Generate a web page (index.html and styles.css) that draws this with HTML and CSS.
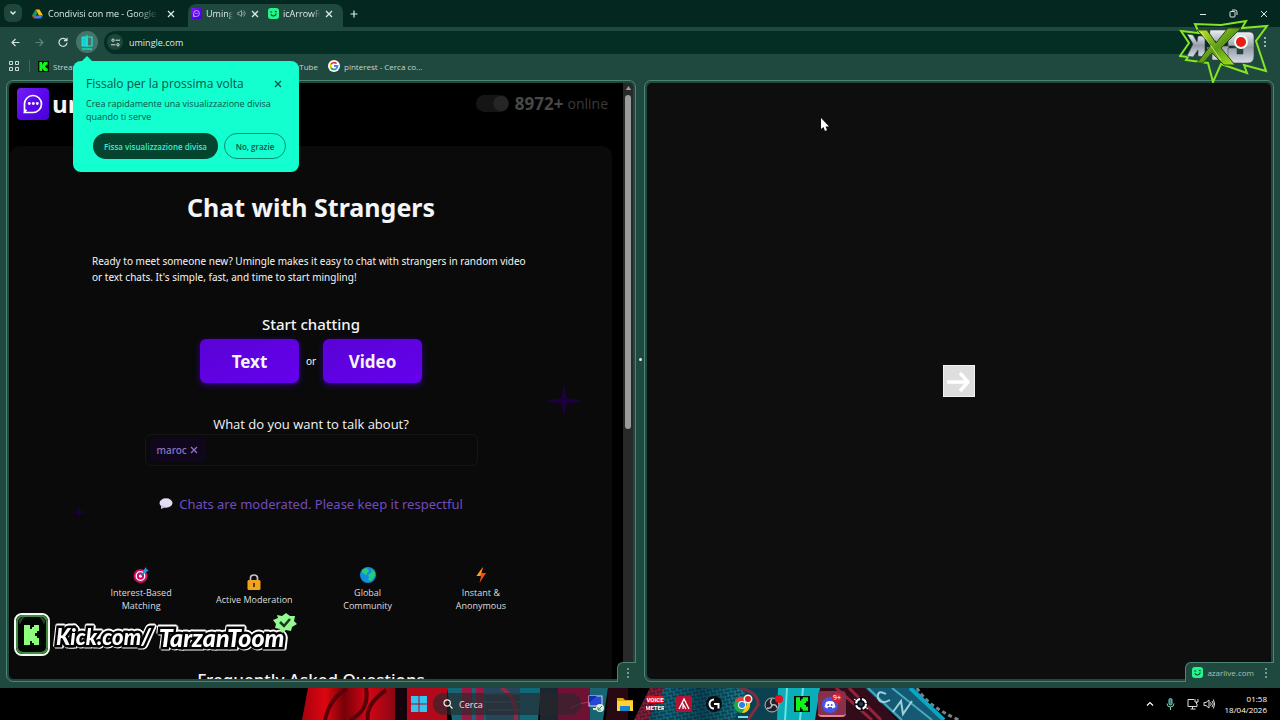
FILE: index.html
```html
<!DOCTYPE html>
<html lang="it">
<head>
<meta charset="utf-8">
<meta name="viewport" content="width=device-width, initial-scale=1">
<title>Umingle</title>
<link rel="stylesheet" href="styles.css">
</head>
<body>
<svg class="defs" aria-hidden="true">
  <symbol id="close" viewBox="0 0 10 10"><path d="M2 2l6 6M8 2L2 8" fill="none" stroke="currentColor" stroke-width="1.3"/></symbol>
  <symbol id="umingle" viewBox="0 0 32 32"><defs><linearGradient id="ug" x1="0" y1="0" x2="1" y2="1"><stop offset="0" stop-color="#7620f2"/><stop offset=".5" stop-color="#5a08ec"/><stop offset="1" stop-color="#4800d4"/></linearGradient></defs><rect width="32" height="32" rx="4" fill="url(#ug)"/><path d="M7.500 24v-8a8.500 8.500 0 1 1 8.500 8.500H7.200l2.300-2.800" fill="none" stroke="#fff" stroke-width="1.700" stroke-linejoin="round"/><circle cx="12.300" cy="15.500" r="1.400" fill="#fff"/><circle cx="16.300" cy="15.500" r="1.400" fill="#fff"/><circle cx="20.300" cy="15.500" r="1.400" fill="#fff"/></symbol>
  <symbol id="azar" viewBox="0 0 12 12"><rect width="12" height="12" rx="3" fill="#23f58a"/><path d="M2.500 4.300h2M7.500 3.500l2 .8M3 6.800c1.500 2.700 5 2.500 6-.8" fill="none" stroke="#06452a" stroke-width="1.200"/></symbol>
  <symbol id="kick" viewBox="0 0 12 12"><rect width="12" height="12" fill="#031006"/><path d="M1.500 1h3v2.600h1V2.300h1V1h4v3H9v1.300H8v1.400h1V8h1.500v3h-4V9.700h-1V8.400h-1V11h-3z" fill="#12f51a"/></symbol>
  <symbol id="dots" viewBox="0 0 4 12"><circle cx="2" cy="2" r="1"/><circle cx="2" cy="6" r="1"/><circle cx="2" cy="10" r="1"/></symbol>
</svg>

<header class="browser">
  <nav class="tabs" aria-label="Schede">
    <button class="tab-search" aria-label="Cerca schede"><svg width="8" height="8" viewBox="0 0 8 8"><path d="M1.500 2.500L4 5l2.500-2.500" fill="none" stroke="#e4f1ec" stroke-width="1.400"/></svg></button>
    <div class="tab tab-drive">
      <svg width="11" height="10" viewBox="0 0 22 20"><path d="M7 1h8l7 12h-8z" fill="#fbc116"/><path d="M7 1l4 7-7 11-4-6z" fill="#159957"/><path d="M7 13h15l-4 6H4z" fill="#3b7fed"/><path d="M7 13l-3 6-4-6z" fill="#e13e2e"/></svg>
      <span class="tab-title">Condivisi con me - Google Drive</span>
      <button aria-label="Chiudi scheda"><svg width="10" height="10"><use href="#close"/></svg></button>
    </div>
    <div class="split-tabs">
      <div class="tab tab-umingle">
        <svg width="11" height="11"><use href="#umingle"/></svg>
        <span class="tab-title">Umingle</span>
        <svg width="9" height="9" viewBox="0 0 12 12"><path d="M1 4.500h2L6 2v8L3 7.500H1zM7.500 4q2 2 0 4M9 2q4 4 0 8" fill="none" stroke="#a8beb7"/></svg>
        <button aria-label="Chiudi scheda"><svg width="10" height="10"><use href="#close"/></svg></button>
      </div>
      <div class="tab tab-azar">
        <svg width="11" height="11"><use href="#azar"/></svg>
        <span class="tab-title">icArrowRight</span>
        <button aria-label="Chiudi scheda"><svg width="10" height="10"><use href="#close"/></svg></button>
      </div>
    </div>
    <button class="new-tab" aria-label="Nuova scheda"><svg width="8" height="8" viewBox="0 0 8 8"><path d="M4 .5v7M.5 4h7" stroke="currentColor" stroke-width="1.200"/></svg></button>
    <div class="window-controls">
      <button aria-label="Riduci"><svg width="8" height="8" viewBox="0 0 8 8"><path d="M1 4.500h6" stroke="currentColor"/></svg></button>
      <button aria-label="Ripristina"><svg width="9" height="9" viewBox="0 0 9 9"><rect x="1" y="2.500" width="5" height="5.500" rx="1" fill="none" stroke="currentColor"/><path d="M3 1h3q2 0 2 2v3" fill="none" stroke="currentColor"/></svg></button>
      <button aria-label="Chiudi"><svg width="8" height="8" viewBox="0 0 8 8"><path d="M1 1l6 6M7 1L1 7" stroke="currentColor"/></svg></button>
    </div>
  </nav>

  <div class="toolbar">
    <button aria-label="Indietro"><svg width="9" height="9" viewBox="0 0 9 9"><path d="M8.500 4.500H1M4.500 1L1 4.500 4.500 8" fill="none" stroke="#d3e4dd" stroke-width="1.200"/></svg></button>
    <button aria-label="Avanti"><svg width="9" height="9" viewBox="0 0 9 9"><path d="M.5 4.500H8M4.500 1L8 4.500 4.500 8" fill="none" stroke="#5f8277" stroke-width="1.200"/></svg></button>
    <button aria-label="Ricarica"><svg width="10" height="10" viewBox="0 0 10 10"><path d="M8.300 3A4 4 0 1 0 9 5.700M9 .8V3.700H6" fill="none" stroke="#d3e4dd" stroke-width="1.200"/></svg></button>
    <div class="split-anchor">
      <button class="split-button" aria-label="Visualizzazione divisa"><svg width="12" height="15" viewBox="0 0 12 15"><path d="M1 2h5v9H1z" fill="#18cfd0" stroke="#18e5dc"/><path d="M6 0v12" stroke="#18e5dc" stroke-width="1.300"/><path d="M7 2h4v9H7" fill="none" stroke="#18e5dc" stroke-width="1.200"/><path d="M1 14h10" stroke="#18d5bb" stroke-width="1.500"/></svg></button>
      <section class="promo" aria-labelledby="promo-title">
        <div class="promo-head"><h2 id="promo-title">Fissalo per la prossima volta</h2><button aria-label="Chiudi"><svg width="10" height="10"><use href="#close"/></svg></button></div>
        <p>Crea rapidamente una visualizzazione divisa quando ti serve</p>
        <div class="promo-actions"><button class="pin">Fissa visualizzazione divisa</button><button class="decline">No, grazie</button></div>
      </section>
    </div>
    <label class="omnibox">
      <span class="site-info"><svg width="9" height="9" viewBox="0 0 9 9"><g fill="none" stroke="#d3e4dd"><circle cx="2" cy="2.200" r="1.200"/><path d="M4.500 2.200H9M0 6.800h4.500"/><circle cx="7" cy="6.800" r="1.200"/></g></svg></span>
      <input type="text" value="umingle.com" aria-label="Indirizzo">
    </label>
    <button class="menu" aria-label="Menu"><svg width="4" height="12" fill="#c6d8d0"><use href="#dots"/></svg></button>
  </div>

  <nav class="bookmarks" aria-label="Preferiti">
    <button class="apps" aria-label="App"><svg width="10" height="10" viewBox="0 0 10 10"><path d="M.5.500h3v3h-3zM6.500.500h3v3h-3zM.5 6.500h3v3h-3zM6.500 6.500h3v3h-3z" fill="none" stroke="#cfded8"/></svg></button>
    <a class="bm-stream" href="#"><svg width="11" height="11"><use href="#kick"/></svg>Stream</a>
    <a class="bm-youtube" href="#">YouTube</a>
    <a href="#"><svg width="12" height="12" viewBox="0 0 12 12"><circle cx="6" cy="6" r="6" fill="#fff"/><g fill="none" stroke-width="1.800"><path d="M8.600 3.700A3.500 3.500 0 0 0 3 4.300" stroke="#e94335"/><path d="M3 4.300a3.500 3.500 0 0 0 0 3.400" stroke="#f9bb05"/><path d="M3 7.700a3.500 3.500 0 0 0 5.200 1" stroke="#34a853"/><path d="M8.200 8.700Q9.500 7.600 9.500 6H6" stroke="#4285f4"/></g></svg>pinterest - Cerca co...</a>
  </nav>
  <svg class="stream-mark" viewBox="0 0 92 64" role="img" aria-label="KX9">
    <defs><linearGradient id="silver" x1="0" y1="0" x2="0" y2="1"><stop stop-color="#eef1f5"/><stop offset=".5" stop-color="#949ca6"/><stop offset="1" stop-color="#d6dde8"/></linearGradient><linearGradient id="lime" x1="0" y1="0" x2="1" y2="1"><stop stop-color="#c9ee2c"/><stop offset=".5" stop-color="#5c9a16"/><stop offset="1" stop-color="#b5ef20"/></linearGradient></defs>
    <path d="M2 12l18 2-4-9 26 1 25-4-4 7 25-2-11 15 10 30-22-6 3 8-26-9-8 18-5-19-22-3 2-3-8-1 9-13z" fill="none" stroke="#84e522" stroke-width="2"/>
    <g fill="url(#silver)" stroke="#3b4248" stroke-width=".6">
      <path d="M8 15l6 1 4 7 1-6h7v21l-7-1v-6l-5 7-6-1 6-12z"/>
      <path d="M31 11h18v9h-6v7h7v14H33v-6h-5v-7h9v-6h-7z"/>
      <path d="M49 17q0-4 4-4h17q5 0 5 5v19q0 7-6 7H55q-6 0-6-7v-8h9v6h6V22h-6v5h-9z"/>
    </g>
    <path d="M18 11h10l9 13L49 9h13L42 29l14 17H45L33 34 24 44h-6l14-18z" fill="url(#lime)" stroke="#294c11"/>
    <path d="M22 13l20 28" stroke="#eaffba" stroke-width="1" opacity=".7"/>
    <circle cx="62" cy="23" r="7" fill="#e8fff1"/><circle cx="62" cy="23" r="5" fill="#e91c18"/>
  </svg>
</header>

<main class="panes">
  <section class="pane">
    <div class="page umingle">
      <div class="page-content">
        <div class="site-header">
          <svg width="32" height="32"><use href="#umingle"/></svg><strong class="brand">umingle</strong>
          <label class="online"><input type="checkbox" checked aria-label="Tema"><b>8972+</b><span>online</span></label>
        </div>
        <div class="card">
          <h1>Chat with Strangers</h1>
          <p class="intro">Ready to meet someone new? Umingle makes it easy to chat with strangers in random video or text chats. It's simple, fast, and time to start mingling!</p>
          <h2>Start chatting</h2>
          <div class="chat-buttons"><button>Text</button><span>or</span><button>Video</button></div>
          <label class="topic-label" for="topic">What do you want to talk about?</label>
          <div class="topics"><span class="chip">maroc <button aria-label="Rimuovi maroc"><svg width="10" height="10"><use href="#close"/></svg></button></span><input id="topic" type="text"></div>
          <p class="moderated"><svg width="14" height="12" viewBox="0 0 14 12"><ellipse cx="7" cy="5" rx="6.500" ry="4.700" fill="#e4dbf5"/><path d="M2 7v4l5-2" fill="#c9bfe0"/></svg>Chats are moderated. Please keep it respectful</p>
          <ul class="features">
            <li><svg width="16" height="16" viewBox="0 0 16 16"><circle cx="7.500" cy="9" r="7" fill="#cf0d65"/><circle cx="7.500" cy="9" r="4.300" fill="none" stroke="#fff" stroke-width="1.300"/><circle cx="7.500" cy="9" r="1.600" fill="#fff"/><path d="M8 8.500l4-4" stroke="#1585ca" stroke-width="1.500"/><path d="M10 4l3-4 .6 2.400L16 3l-4 3z" fill="#289be8"/></svg>Interest-Based<br>Matching</li>
            <li><svg width="16" height="16" viewBox="0 0 16 16"><path d="M4.500 7V4q0-3 3.500-3t3.500 3v3" fill="none" stroke="#c7c0cf" stroke-width="1.700"/><rect x="1.500" y="6" width="13" height="10" rx="1.500" fill="#f2a51a"/><path d="M8 9v4" stroke="#5b3914" stroke-width="2"/></svg>Active Moderation</li>
            <li><svg width="16" height="16" viewBox="0 0 16 16"><circle cx="8" cy="8" r="8" fill="#128cdf"/><path d="M2 3l5-2 2 3-2 2v2l-3-1-2-2zM8 8l4-3-1-3 4 3v4l-4 5-3-1 1-3z" fill="#27cc7a"/></svg>Global<br>Community</li>
            <li><svg width="16" height="16" viewBox="0 0 16 16"><path d="M10 0L3.500 9H8l-1.500 7L13 6H8.500z" fill="#f64d15"/><path d="M10 0L3.500 9H7z" fill="#ff9e24"/></svg>Instant &amp;<br>Anonymous</li>
          </ul>
          <h2 class="faq">Frequently Asked Questions</h2>
          <svg class="sparkle sparkle-big" viewBox="0 0 40 40"><path d="M20 0q2 17 4 17l16 3-16 3q-2 0-4 17-2-17-4-17L0 20l16-3q2 0 4-17z"/></svg>
          <svg class="sparkle sparkle-small" viewBox="0 0 40 40"><path d="M20 0q2 17 4 17l16 3-16 3q-2 0-4 17-2-17-4-17L0 20l16-3q2 0 4-17z"/></svg>
        </div>
      </div>
      <div class="scrollbar"><svg width="9" height="9" viewBox="0 0 9 9"><path d="M4.500 2L8 7H1z" fill="#9a9a9a"/></svg><span></span></div>
    </div>
    <div class="pane-tag"><svg width="4" height="12" fill="#93b5aa"><use href="#dots"/></svg></div>
    <div class="overlay-kick">
      <svg width="36" height="43" viewBox="0 0 36 43"><rect x="1" y="1" width="34" height="41" rx="7" fill="#020703" stroke="#f1fff0" stroke-width="2"/><rect x="3" y="3" width="30" height="37" rx="6" fill="none" stroke="#438a42" stroke-width="2"/><path d="M5 8q1-4 6-4-4 3-5 8zM31 8q-1-4-6-4 4 3 5 8z" fill="#3b3f42"/><path d="M10 12h6v4h2v-2h2v-2h5v6h-2v2h-2v3h2v2h2v7h-5v-2h-2v-2h-2v4h-6z" fill="#8dff7d"/></svg>
      <span class="kick-url">Kick.com/</span><span class="kick-name">TarzanToom</span>
      <svg class="verified" width="24" height="20" viewBox="0 0 24 20"><path d="M4 2l5 1 4-3 4 3h5l-1 5 3 3-5 3-1 4-5-1-4 3-2-4-5-1 1-4-3-4 5-2z" fill="#93f990"/><path d="M7 9l4 4 6-7" fill="none" stroke="#18381a" stroke-width="2.500"/></svg>
    </div>
  </section>
  <div class="divider"></div>
  <section class="pane">
    <div class="page azar"><svg width="32" height="32" viewBox="0 0 32 32"><rect width="32" height="32" fill="#f1f1f1"/><rect x="1" y="1" width="30" height="30" fill="#dedede"/><path d="M4 17h21M17 8l8 9-8 9" fill="none" stroke="#fff" stroke-width="3.500" stroke-linejoin="round"/></svg></div>
    <div class="pane-tag"><svg width="11" height="11"><use href="#azar"/></svg><span>azarlive.com</span><svg width="4" height="12" fill="#93b5aa"><use href="#dots"/></svg></div>
    <svg class="cursor" width="8" height="14" viewBox="0 0 8 14"><path d="M0 0v11l2.500-2L4 13l2-1-1.500-3.500H8z" fill="#fff"/></svg>
  </section>
</main>

<footer class="taskbar">
  <svg class="wallpaper" viewBox="0 0 1280 32" preserveAspectRatio="xMidYMid slice" aria-hidden="true">
    <defs>
      <linearGradient id="red"><stop stop-color="#a8000d"/><stop offset=".25" stop-color="#dc0710"/><stop offset=".45" stop-color="#770008"/><stop offset=".7" stop-color="#d50515"/><stop offset="1" stop-color="#860712"/></linearGradient>
      <linearGradient id="teal"><stop stop-color="#083c4a"/><stop offset=".3" stop-color="#116a80"/><stop offset=".6" stop-color="#0b465a"/><stop offset="1" stop-color="#168395"/></linearGradient>
      <pattern id="weave" width="5" height="5" patternUnits="userSpaceOnUse" patternTransform="rotate(35)"><path d="M0 1h3M2 4h3" stroke="#071820" stroke-width="1"/></pattern>
    </defs>
    <path d="M308 0h88l-1 32h-93z" fill="url(#red)"/><path d="M325 32q5-22 22-31M350 32q20-10 16-32M368 32q-3-15 18-30" fill="none" stroke="#5a000a" stroke-width="4"/>
    <path d="M395 0h12v32h-12z" fill="#14040b"/><path d="M407 0h40v32h-40z" fill="#b3091b"/>
    <path d="M447 0h50l30 32h-75z" fill="#176676"/><path d="M462 0h10v32h-10zM476 0h8v32h-8z" fill="#9a1841"/>
    <path d="M484 0h52l-4 32h-46z" fill="#254759"/><path d="M484 6h40M484 14h48M488 22h40" stroke="#48728a"/><path d="M501 0q16 8 15 32" fill="none" stroke="#932944" stroke-width="4"/>
    <path d="M520 0h21l-3 32h-18z" fill="#106979"/><path d="M540 0h18v32h-18z" fill="#1b2730"/><path d="M558 0h32v32h-32z" fill="#6f1134"/><path d="M570 20q22-12 35 0" fill="none" stroke="#ae3656"/>
    <path d="M590 0h18l-5 32h-13z" fill="#176573"/><path d="M608 0h20v32h-22z" fill="#280813"/>
    <path d="M650 0h97l-10 32H634z" fill="url(#teal)"/><path d="M650 0h14l-16 32h-14z" fill="#8e1938"/><path d="M650 0h97l-10 32H634z" fill="url(#weave)"/>
    <path d="M747 0h32v32h-45z" fill="#0b4252"/><path d="M739 0q20 4 19 17l-10 15" fill="none" stroke="#822b43" stroke-width="3"/>
    <path d="M778 0h44l-6 32h-39z" fill="#0aaeb9"/><path d="M787 0l-2 32M803 0l-3 32" stroke="#67e3e4" stroke-width="2"/>
    <path d="M820 0h47l30 32h-82z" fill="#340b18"/><path d="M836 0l36 32M849 0l32 32" stroke="#98223c" stroke-width="3"/>
    <path d="M865 0h50l28 32h-44z" fill="#145a74"/><path d="M868 0l34 32M892 0l40 32" stroke="#48a9bc" stroke-width="2"/><path d="M886 6q-9-5-8 4 3 7 12 2M893 24l8-11 2 13 9-13" fill="none" stroke="#9bd0dd" stroke-width="2"/>
    <path d="M917 0q10 18 42 32" fill="none" stroke="#77858a" stroke-width="3" stroke-dasharray="4 3"/><path d="M910 0l34 32" stroke="#07a7c5" stroke-width="4"/>
  </svg>
  <div class="task-center">
    <button class="start" aria-label="Start"><svg width="16" height="16" viewBox="0 0 16 16"><path d="M0 0h7.500v7.500H0zM8.500 0H16v7.500H8.500zM0 8.500h7.500V16H0zM8.500 8.500H16V16H8.500z" fill="#33c4f0"/></svg></button>
    <label class="search"><svg width="10" height="10" viewBox="0 0 10 10"><circle cx="4.200" cy="4" r="3.200" fill="none" stroke="#eee" stroke-width="1.200"/><path d="M6.500 6.300L9.500 9.500" stroke="#eee" stroke-width="1.200"/></svg><input type="search" placeholder="Cerca" aria-label="Cerca"></label>
    <div class="task-apps">
      <button aria-label="Desktop remoto"><svg width="16" height="18" viewBox="0 0 16 18"><rect x="1" y="1" width="13" height="10" fill="#2449d8" stroke="#cfd6e2"/><path d="M1 1h8L1 8z" fill="#172bb3"/><path d="M5 14h8" stroke="#ddd" stroke-width="2"/><circle cx="12" cy="13" r="4" fill="#e3ece4"/><path d="M10 15l4-4M10 12v3h3" stroke="#25983f" fill="none"/></svg></button>
      <button aria-label="Esplora file"><svg width="16" height="15" viewBox="0 0 16 15"><path d="M0 1h6l2 2h8v11H0z" fill="#e2a616"/><path d="M0 4h16v10H0z" fill="#ffd43a"/><path d="M3 9h10v5H3z" fill="#1c83ce"/></svg></button>
      <button aria-label="Voicemeeter"><svg width="18" height="16" viewBox="0 0 18 16"><path d="M1 0h16v7H1z" fill="#df1923"/><g font-family="Roboto" font-size="6" font-weight="700" text-anchor="middle" fill="#fff"><text x="9" y="6">VOICE</text><text x="9" y="14">METER</text></g></svg></button>
      <button aria-label="Riot"><svg width="16" height="16" viewBox="0 0 16 16"><rect width="16" height="16" rx="2" fill="#b41230"/><path d="M3 13L8 3l5 10M7 13V8l3 5" fill="none" stroke="#fff" stroke-width="1.300"/></svg></button>
      <button aria-label="Logitech G"><svg width="16" height="16" viewBox="0 0 16 16"><circle cx="8" cy="8" r="8" fill="#0b0c10"/><path d="M8 3.500a4.500 4.500 0 1 0 0 9M8 8h4.500v4.500" fill="none" stroke="#fff" stroke-width="2"/></svg></button>
      <button class="running" aria-label="Chrome"><svg width="20" height="20" viewBox="0 0 20 20"><circle cx="9" cy="11" r="8" fill="#20a84a"/><path d="M2 7a8 8 0 0 1 14 0H9z" fill="#ea4335"/><path d="M16 7a8 8 0 0 1-7 12l4-7z" fill="#fbc116"/><circle cx="9" cy="11" r="4" fill="#fff"/><circle cx="9" cy="11" r="3" fill="#307ded"/><circle cx="15" cy="5" r="4.500" fill="#f4f4f4"/><circle cx="15" cy="5" r="3" fill="#d7211a"/></svg></button>
      <button aria-label="OBS"><svg width="20" height="20" viewBox="0 0 20 20"><circle cx="9" cy="11" r="7" fill="#20212a" stroke="#b9bdc4"/><g fill="none" stroke="#b9bdc4" stroke-width="1.500"><path d="M9 5q-3 3 0 6"/><path d="M9 5q-3 3 0 6" transform="rotate(120 9 11)"/><path d="M9 5q-3 3 0 6" transform="rotate(240 9 11)"/></g><circle cx="16" cy="5" r="4" fill="#e8121c"/></svg></button>
      <button aria-label="Kick"><svg width="16" height="16"><use href="#kick"/></svg></button>
      <button class="discord" aria-label="Discord"><svg width="22" height="20" viewBox="0 0 22 20"><circle cx="9" cy="12" r="8" fill="#4755e6"/><path d="M5 9q4-2 8 0l1.500 5-3 1.500-.8-1.500H7.300l-.8 1.500-3-1.500z" fill="#fff"/><circle cx="7.300" cy="12" r="1" fill="#4755e6"/><circle cx="10.700" cy="12" r="1" fill="#4755e6"/><circle cx="16" cy="5" r="5" fill="#d2202d"/><text x="16" y="7" font-family="Roboto" font-size="7" text-anchor="middle" fill="#fff">9+</text></svg></button>
      <button aria-label="Streaming"><svg width="16" height="16" viewBox="0 0 16 16"><circle cx="8" cy="8" r="7" fill="#080a12"/><circle cx="8" cy="8" r="5" fill="none" stroke="#fff" stroke-width="2" stroke-dasharray="6 2"/><path d="M4 5l-3-2M12 11l3 2" stroke="#fff"/><circle cx="8" cy="8" r="2" fill="#243b5c"/></svg></button>
    </div>
  </div>
  <div class="tray">
    <svg width="8" height="8" viewBox="0 0 8 8"><path d="M1 5.500L4 2.500l3 3" fill="none" stroke="#fff" stroke-width="1.200"/></svg>
    <svg width="9" height="12" viewBox="0 0 9 12"><rect x="3" y=".5" width="3" height="6.500" rx="1.500" fill="#257b74" stroke="#7bd2bf"/><path d="M1 5.500q0 3.500 3.500 3.500T8 5.500M4.500 9v3" fill="none" stroke="#7bd2bf"/></svg>
    <svg width="12" height="12" viewBox="0 0 12 12"><path d="M7 1.500H1v7h9V6M3.500 11h5M5.500 8.500V11M8 1v3h3V1M9.500 4v2" fill="none" stroke="#ddd"/></svg>
    <svg width="12" height="12" viewBox="0 0 12 12"><path d="M1 4.500h2L6 2v8L3 7.500H1zM7.500 4.300q1.500 1.700 0 3.400M9 3q2.800 3 0 6M10.300 1.500q3 4.500 0 9" fill="none" stroke="#ddd"/></svg>
    <time datetime="2026-04-18T01:58">01:58<br>18/04/2026</time>
  </div>
</footer>
</body>
</html>
```
FILE: styles.css
```css
* { box-sizing: border-box; }
body {
  margin: 0;
  height: 100vh;
  display: flex;
  flex-direction: column;
  overflow: hidden;
  background: #1f483f;
  color: #dcebe5;
  font-family: "Open Sans", "Noto Sans", sans-serif;
  font-size: 9px;
}
button, input { font: inherit; color: inherit; border: 0; background: none; padding: 0; margin: 0; outline: 0; }
button { display: flex; align-items: center; justify-content: center; }
h1, h2, p, ul { margin: 0; padding: 0; }
svg { display: block; flex: none; }
.defs { position: absolute; width: 0; height: 0; }

.browser { position: relative; z-index: 3; flex: none; }
.tabs { display: flex; align-items: stretch; height: 27px; padding-left: 4px; background: #04271f; }
.tab-search { width: 18px; height: 18px; margin-top: 4px; border-radius: 6px; background: #1e463b; }
.tab { display: flex; align-items: center; gap: 5px; }
.tab-title { flex: 1; min-width: 0; overflow: hidden; white-space: nowrap; mask-image: linear-gradient(to right, #000 80%, transparent); }
.tab-drive { width: 163px; margin-right: 3px; padding: 0 9px 0 10px; }
.tab-drive .tab-title { margin-right: 2px; }
.split-tabs { display: flex; margin-top: 4px; width: 155px; background: #1f483f; border-radius: 8px 8px 0 0; }
.split-tabs .tab { padding-bottom: 4px; gap: 4px; }
.tab-umingle { width: 72px; padding-left: 3px; }
.tab-azar { width: 74px; padding-left: 8px; }
.new-tab { width: 26px; margin-left: -2px; }
.window-controls { display: flex; gap: 22px; margin-left: auto; padding-right: 12px; }

.toolbar { display: flex; align-items: center; height: 30px; padding: 0 2px 0 3px; }
.toolbar > button { width: 24px; height: 22px; }
.split-anchor { position: relative; width: 24px; }
.split-button { width: 22px; height: 22px; margin: auto; border-radius: 50%; background: #467469; }
.omnibox { display: flex; align-items: center; gap: 6px; flex: 1; height: 23px; margin: 0 18px 0 5px; padding-left: 3px; border-radius: 12px; background: #042d23; }
.omnibox input { flex: 1; font-size: 9px; }
.site-info { display: grid; place-items: center; width: 16px; height: 16px; border-radius: 50%; background: #1e463b; }
.toolbar > .menu { width: 26px; }
.bookmarks { display: flex; align-items: center; height: 22px; padding: 0 0 4px 8px; }
.bookmarks a { display: flex; align-items: center; gap: 4px; color: #c4d6cf; text-decoration: none; font-size: 8px; }
.apps { width: 22px; height: 12px; padding-right: 10px; border-right: 1px solid #3f665b; }
.bookmarks .bm-stream { width: 243px; padding-left: 8px; }
.bookmarks .bm-youtube { width: 55px; padding-right: 10px; justify-content: flex-end; }
.stream-mark { position: absolute; right: 9px; top: 19px; width: 92px; height: 64px; }

.promo { position: absolute; top: 30px; left: -2px; width: 226px; padding: 15px 13px 13px; border-radius: 8px; background: #13ffd0; color: #075447; }
.promo::before { content: ""; position: absolute; left: 8px; top: -5px; border: 6px solid transparent; border-top: 0; border-bottom-color: #13ffd0; }
.promo-head { display: flex; justify-content: space-between; align-items: center; height: 16px; padding-right: 3px; }
.promo h2 { font-size: 12px; line-height: 16px; font-weight: 400; }
.promo p { margin-top: 5px; font-size: 9px; line-height: 13px; }
.promo-actions { display: flex; justify-content: flex-end; gap: 6px; margin-top: 10px; }
.promo-actions button { height: 26px; border-radius: 13px; font-size: 8px; font-weight: 600; }
.pin { width: 125px; background: #05442f; color: #35eecb; }
.decline { width: 62px; border: 1px solid #078e73; }

.panes { flex: 1; min-height: 0; display: flex; padding: 1px 6px 6px; }
.pane { position: relative; flex: 1; min-width: 0; padding: 2px; border: 1px solid #508575; border-radius: 7px; }
.divider { width: 8px; display: grid; place-items: center; }
.divider::before { content: ""; width: 3px; height: 3px; margin-bottom: 43px; border-radius: 50%; background: #dceee7; }
.page { height: 100%; border-radius: 5px; overflow: hidden; }
.pane-tag { position: absolute; right: -1px; bottom: -1px; display: flex; align-items: center; gap: 4px; height: 20px; padding: 0 6px; border-top: 1px solid #508575; border-left: 1px solid #508575; border-radius: 6px 0 0; background: #1f483f; color: #a3c2b7; font-size: 8px; }
.pane:first-child .pane-tag { padding-left: 8px; }
.pane-tag span { margin-right: 6px; }
.azar { display: grid; place-items: center; background: #0e0e0e; }
.cursor { position: absolute; left: 28%; top: 37px; }

.umingle { display: flex; background: #000; color: #f5f5f5; }
.page-content { flex: 1; min-width: 0; overflow: hidden; }
.site-header { display: flex; align-items: center; height: 63px; padding: 0 15px 22px 8px; }
.brand { margin-left: 3px; font-size: 24px; line-height: 32px; }
.online { display: flex; align-items: center; margin-left: auto; color: #484848; }
.online input { appearance: none; width: 33px; height: 17px; margin-right: 6px; border-radius: 9px; background: radial-gradient(circle at 25px 50%, #262626 7px, #151515 8px); }
.online b { margin-right: 4px; font-size: 17px; }
.online span { font-size: 14px; color: #3b3b3b; }
.card { position: relative; margin: 0 11px 0 1px; display: flex; flex-direction: column; align-items: center; min-height: 600px; padding-top: 44px; border-radius: 10px; background: #0a0a0a; font-family: "Noto Sans", "Open Sans", sans-serif; }
.card h1 { font-size: 25px; line-height: 34px; font-weight: 700; }
.intro { width: 440px; margin-top: 29px; padding-left: 1px; font-size: 10px; line-height: 16px; }
.card h2 { margin-top: 28px; font-size: 15px; line-height: 22px; font-weight: 500; }
.chat-buttons { display: flex; align-items: center; margin-top: 4px; font-size: 10px; }
.chat-buttons span { width: 24px; text-align: center; }
.chat-buttons button { width: 99px; height: 44px; border-radius: 6px; background: linear-gradient(160deg, #5903d5, #6500ed); box-shadow: 0 2px 6px #30008a; font-size: 17px; font-weight: 700; }
.topic-label { margin-top: 31px; font-family: "Open Sans", sans-serif; font-size: 13px; line-height: 20px; }
.topics { display: flex; align-items: center; gap: 6px; width: 333px; height: 32px; padding: 3px 4px; border: 1px solid #151515; border-radius: 6px; }
.topics input { flex: 1; min-width: 0; }
.chip { display: flex; align-items: center; gap: 2px; height: 24px; padding: 0 7px; border-radius: 6px; background: #10071e; color: #8d76bd; font-size: 10px; font-weight: 500; }
.moderated { display: flex; align-items: center; gap: 6px; margin-top: 28px; font-size: 13px; line-height: 20px; color: #724bbd; }
.features { display: grid; grid-template-columns: repeat(4, 1fr); align-items: center; width: 453px; margin-top: 53px; list-style: none; font-family: "Open Sans", sans-serif; font-size: 9px; line-height: 13px; font-weight: 500; text-align: center; color: #dedede; }
.features svg { margin: 0 auto 3px; }
.card .faq { margin-top: 57px; font-size: 17px; }
.sparkle { position: absolute; fill: #1c003c; }
.sparkle-big { right: 29px; top: 236px; width: 38px; height: 38px; }
.sparkle-small { left: 61px; top: 358px; width: 16px; height: 16px; }
.scrollbar { flex: none; width: 10px; padding: 0 2px; background: #292929; }
.scrollbar svg { width: 7px; height: 10px; }
.scrollbar span { display: block; height: 56%; margin-top: 2px; border-radius: 4px; background: #9b9b9b; }

.overlay-kick { position: absolute; left: 7px; bottom: 25px; display: flex; align-items: center; font-family: Lato, sans-serif; font-style: italic; font-weight: 900; color: #fff; white-space: nowrap; }
.kick-url, .kick-name { -webkit-text-stroke: 5px #000; paint-order: stroke fill; filter: drop-shadow(1px 1px 0 #fff) drop-shadow(-1px -1px 0 #fff) drop-shadow(1px -1px 0 #fff); }
.kick-url { margin-left: 6px; padding-top: 4px; font-size: 22px; line-height: 30px; }
.kick-name { margin-left: 8px; padding-top: 4px; font-size: 25px; line-height: 30px; }
.verified { position: absolute; right: -13px; top: 0; }

.taskbar { position: relative; flex: none; display: grid; grid-template-columns: 1fr auto 1fr; align-items: center; height: 32px; background: #000; color: #fff; }
.wallpaper { position: absolute; width: 100%; height: 100%; }
.task-center { position: relative; grid-column: 2; display: flex; align-items: center; }
.start { width: 29px; height: 32px; }
.search { display: flex; align-items: center; gap: 6px; width: 148px; height: 22px; padding: 0 10px; border-radius: 11px; background: rgba(40, 40, 44, .65); }
.search input { min-width: 0; width: 100%; font-size: 9px; }
.search input::placeholder { color: #e3e0e2; opacity: 1; }
.task-apps { display: grid; grid-template-columns: repeat(10, 1fr); width: 295px; height: 32px; }
.task-apps button { min-width: 0; }
.task-apps .running { background: linear-gradient(#7dd9ee, #7dd9ee) center 28px / 10px 2px no-repeat; }
.task-apps .discord { margin: 3px 1px; border-radius: 4px; border-bottom: 2px solid #e6848d; background: #86314b; }
.tray { position: relative; grid-column: 3; display: flex; align-items: center; justify-content: flex-end; padding-right: 13px; }
.tray svg { margin-right: 4px; }
.tray svg:nth-child(-n+2) { margin-right: 12px; }
.tray time { margin-left: 6px; font-size: 8px; line-height: 11px; text-align: right; }
```
